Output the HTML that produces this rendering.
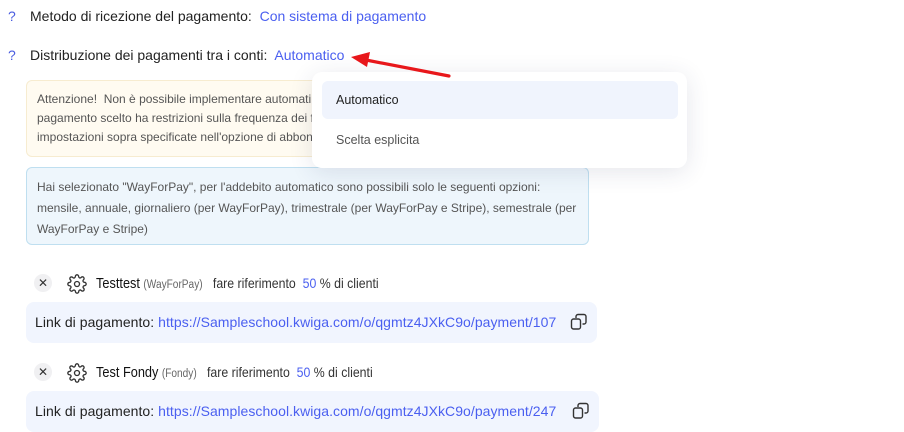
<!DOCTYPE html>
<html><head><meta charset="utf-8"><style>
*{margin:0;padding:0;box-sizing:border-box}
body{width:904px;height:429px;background:#fff;font-family:"Liberation Sans",sans-serif;position:relative;overflow:hidden;color:#222}
.a{position:absolute;white-space:nowrap}
.q{color:#4b5de0;font-size:14px}
.lbl{font-size:14px;color:#222}
.blue{color:#4a5ff0}
.box{position:absolute;border-radius:6px;font-size:12px;line-height:21px;color:#555;padding:9px 10px}
.nar{font-family:"Liberation Sans Narrow","Liberation Sans",sans-serif;font-size:14px;color:#333;display:inline-block;transform:scaleX(.88);transform-origin:left}
.x{position:absolute;width:18px;height:18px;border-radius:50%;background:#f0f0f2;font-size:12px;text-align:center;line-height:18px;color:#333}
.link{position:absolute;left:26px;width:571px;height:41px;background:#f1f5fe;border-radius:8px;font-size:14px;letter-spacing:.05px;line-height:41px;padding-left:9px;color:#222}
</style></head><body>
<div class="a q" style="left:8px;top:8px">?</div>
<div class="a lbl" style="left:30px;top:8px">Metodo di ricezione del pagamento:&nbsp; <span class="blue">Con sistema di pagamento</span></div>
<div class="a q" style="left:8px;top:47px">?</div>
<div class="a lbl" style="left:30px;top:47px">Distribuzione dei pagamenti tra i conti:&nbsp; <span class="blue">Automatico</span></div>

<div class="box" style="left:26px;top:80px;width:300px;height:77px;background:#fffbf1;border:1px solid #f7ecd0;white-space:nowrap;overflow:hidden;line-height:19px">Attenzione!&nbsp; Non è possibile implementare automati<br>pagamento scelto ha restrizioni sulla frequenza dei f<br>impostazioni sopra specificate nell'opzione di abbon</div>
<div class="box" style="left:26px;top:167px;width:563px;height:78px;background:#eef6fc;border:1px solid #bfdff0;padding-right:4px">Hai selezionato "WayForPay", per l'addebito automatico sono possibili solo le seguenti opzioni:<br>mensile, annuale, giornaliero (per WayForPay), trimestrale (per WayForPay e Stripe), semestrale (per<br>WayForPay e Stripe)</div>

<div class="a" style="left:312px;top:72px;width:375px;height:96px;background:#fff;border-radius:10px;box-shadow:0 4px 24px rgba(40,50,90,.12)">
<div style="position:absolute;left:10px;top:9px;width:356px;height:38px;background:#f0f4fd;border-radius:6px"></div>
<div class="a" style="left:24px;top:21px;font-size:12.5px;color:#222">Automatico</div>
<div class="a" style="left:24px;top:61px;font-size:12.5px;color:#555">Scelta esplicita</div>
</div>
<svg class="a" style="left:0;top:0" width="904" height="429"><line x1="449" y1="76" x2="366" y2="60" stroke="#e8171b" stroke-width="3.2" stroke-linecap="round"/><polygon points="351,57 370,52 367,67" fill="#e8171b"/></svg>

<div class="x" style="left:34px;top:274px">✕</div>
<svg class="a" style="left:67px;top:274px" width="20" height="20" viewBox="0 0 24 24" fill="none" stroke="#333" stroke-width="1.6"><circle cx="12" cy="12" r="3"/><path d="M19.4 15a1.7 1.7 0 0 0 .3 1.8l.1.1a2 2 0 1 1-2.8 2.8l-.1-.1a1.7 1.7 0 0 0-1.8-.3 1.7 1.7 0 0 0-1 1.5V21a2 2 0 1 1-4 0v-.1a1.7 1.7 0 0 0-1.1-1.5 1.7 1.7 0 0 0-1.8.3l-.1.1a2 2 0 1 1-2.8-2.8l.1-.1a1.7 1.7 0 0 0 .3-1.8 1.7 1.7 0 0 0-1.5-1H3a2 2 0 1 1 0-4h.1a1.7 1.7 0 0 0 1.5-1.1 1.7 1.7 0 0 0-.3-1.8l-.1-.1a2 2 0 1 1 2.8-2.8l.1.1a1.7 1.7 0 0 0 1.8.3H9a1.7 1.7 0 0 0 1-1.5V3a2 2 0 1 1 4 0v.1a1.7 1.7 0 0 0 1 1.5 1.7 1.7 0 0 0 1.8-.3l.1-.1a2 2 0 1 1 2.8 2.8l-.1.1a1.7 1.7 0 0 0-.3 1.8V9a1.7 1.7 0 0 0 1.5 1H21a2 2 0 1 1 0 4h-.1a1.7 1.7 0 0 0-1.5 1z"/></svg>
<div class="a" style="left:96px;top:275px"><span class="nar"><span style="color:#111;font-size:14.5px">Testtest</span> <span style="font-size:11.5px;color:#666">(WayForPay)</span>&nbsp;&nbsp; fare riferimento&nbsp; <span class="blue">50</span> % di clienti</span></div>
<div class="link" style="top:302px">Link di pagamento: <span class="blue">https://Sampleschool.kwiga.com/o/qgmtz4JXkC9o/payment/107</span></div>
<svg class="a" style="left:570px;top:313px" width="18" height="18" viewBox="0 0 18 18" fill="none" stroke="#333" stroke-width="1.4"><rect x="1.5" y="6" width="9" height="10" rx="2"/><path d="M6 5V3.5a2 2 0 0 1 2-2h6a2 2 0 0 1 2 2V9a2 2 0 0 1-2 2h-1.5"/></svg>

<div class="x" style="left:34px;top:363px">✕</div>
<svg class="a" style="left:67px;top:363px" width="20" height="20" viewBox="0 0 24 24" fill="none" stroke="#333" stroke-width="1.6"><circle cx="12" cy="12" r="3"/><path d="M19.4 15a1.7 1.7 0 0 0 .3 1.8l.1.1a2 2 0 1 1-2.8 2.8l-.1-.1a1.7 1.7 0 0 0-1.8-.3 1.7 1.7 0 0 0-1 1.5V21a2 2 0 1 1-4 0v-.1a1.7 1.7 0 0 0-1.1-1.5 1.7 1.7 0 0 0-1.8.3l-.1.1a2 2 0 1 1-2.8-2.8l.1-.1a1.7 1.7 0 0 0 .3-1.8 1.7 1.7 0 0 0-1.5-1H3a2 2 0 1 1 0-4h.1a1.7 1.7 0 0 0 1.5-1.1 1.7 1.7 0 0 0-.3-1.8l-.1-.1a2 2 0 1 1 2.8-2.8l.1.1a1.7 1.7 0 0 0 1.8.3H9a1.7 1.7 0 0 0 1-1.5V3a2 2 0 1 1 4 0v.1a1.7 1.7 0 0 0 1 1.5 1.7 1.7 0 0 0 1.8-.3l.1-.1a2 2 0 1 1 2.8 2.8l-.1.1a1.7 1.7 0 0 0-.3 1.8V9a1.7 1.7 0 0 0 1.5 1H21a2 2 0 1 1 0 4h-.1a1.7 1.7 0 0 0-1.5 1z"/></svg>
<div class="a" style="left:96px;top:364px"><span class="nar"><span style="color:#111;font-size:14.5px">Test Fondy</span> <span style="font-size:11.5px;color:#666">(Fondy)</span>&nbsp;&nbsp; fare riferimento&nbsp; <span class="blue">50</span> % di clienti</span></div>
<div class="link" style="top:391px;width:573px">Link di pagamento: <span class="blue">https://Sampleschool.kwiga.com/o/qgmtz4JXkC9o/payment/247</span></div>
<svg class="a" style="left:572px;top:402px" width="18" height="18" viewBox="0 0 18 18" fill="none" stroke="#333" stroke-width="1.4"><rect x="1.5" y="6" width="9" height="10" rx="2"/><path d="M6 5V3.5a2 2 0 0 1 2-2h6a2 2 0 0 1 2 2V9a2 2 0 0 1-2 2h-1.5"/></svg>
</body></html>
